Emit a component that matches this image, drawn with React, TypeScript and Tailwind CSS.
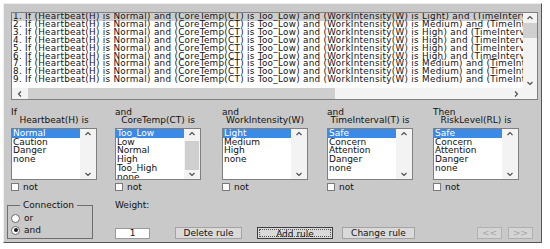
import React from "react";

type Dir = "up" | "down" | "left" | "right";

function Chev({ dir, color = "#4a4a4a" }: { dir: Dir; color?: string }) {
  const d = {
    up: "M1.5 5 L4 2.5 L6.5 5",
    down: "M1.5 3 L4 5.5 L6.5 3",
    left: "M5 1.5 L2.5 4 L5 6.5",
    right: "M3 1.5 L5.5 4 L3 6.5",
  }[dir];
  return (
    <svg width="8" height="8" viewBox="0 0 8 8" className="block">
      <path d={d} fill="none" stroke={color} strokeWidth="1.1" />
    </svg>
  );
}

const wi = ["Light", "Medium", "High", "High", "High", "High", "Medium", "Medium", "Medium"];
const rules = wi.map(
  (w, i) =>
    `${i + 1}. If (Heartbeat(H) is Normal) and (CoreTemp(CT) is Too_Low) and (WorkIntensity(W) is ${w}) and (TimeInterval(T) is Safe) then (RiskLevel(RL) is Safe) (1)`
);

function ListBox({ items, thumb }: { items: string[]; thumb?: boolean }) {
  return (
    <div className="w-[86px] h-[52px] bg-white border border-[#7f7f7f] flex">
      <div className="flex-1 overflow-hidden text-[9px] leading-[8.7px] whitespace-nowrap">
        {items.map((it, i) => (
          <div key={i} className={i === 0 ? "bg-[#3a8ae6] text-white pl-[1px]" : "pl-[1px]"}>
            {it}
          </div>
        ))}
      </div>
      <div className="w-[16px] bg-[#f3f3f3] flex flex-col items-center">
        <div className="h-[10px] flex items-center">
          <Chev dir="up" />
        </div>
        <div className="flex-1 w-full px-[1px]">
          {thumb && <div className="mt-[2px] h-[29px] bg-[#cfcfcf]" />}
        </div>
        <div className="h-[10px] flex items-center">
          <Chev dir="down" />
        </div>
      </div>
    </div>
  );
}

function Column({ l1, l2, items, thumb }: { l1: string; l2: string; items: string[]; thumb?: boolean }) {
  return (
    <div className="flex flex-col text-[9px]">
      <div className="h-[8px] leading-[8px]">{l1}</div>
      <div className="h-[8px] leading-[8px] w-[86px] text-center whitespace-nowrap">{l2}</div>
      <div className="mt-[4px]">
        <ListBox items={items} thumb={thumb} />
      </div>
      <div className="mt-[3px] h-[8px] flex items-center gap-[4px]">
        <div className="w-[8px] h-[8px] bg-white border border-[#7a7a7a]" />
        <span className="leading-[8px]">not</span>
      </div>
    </div>
  );
}

function Radio({ checked, label }: { checked?: boolean; label: string }) {
  return (
    <div className="h-[10px] flex items-center gap-[4px]">
      <div className="w-[9px] h-[9px] rounded-full bg-white border border-[#6a6a6a] flex items-center justify-center">
        {checked && <div className="w-[4px] h-[4px] rounded-full bg-[#1a1a1a]" />}
      </div>
      <span className="leading-[8px]">{label}</span>
    </div>
  );
}

export default function App() {
  return (
    <div className="w-[550px] h-[249px] bg-white pt-[3px] pl-[3px] font-['DejaVu_Sans',sans-serif] text-[#111111]">
      <div className="w-[539px] h-[240px] bg-[#c9c9c9] border border-t-[#eeeeee] border-l-[#eeeeee] border-r-[#555555] border-b-[#555555] flex flex-col">
        {/* Rule list */}
        <div className="ml-[7px] mt-[8px] w-[527px] h-[88px] bg-white border border-[#7f7f7f] flex flex-col">
          <div className="flex h-[75px]">
            <div className="flex-1 overflow-hidden text-[8.8px] leading-[7.9px] tracking-[0.3px] whitespace-nowrap">
              {rules.map((r, i) => (
                <div key={i} className={i === 0 ? "bg-[#cdcdcd] pl-[1px]" : "pl-[1px]"}>
                  {r}
                </div>
              ))}
            </div>
            <div className="w-[14px] bg-[#f3f3f3] flex flex-col items-center">
              <div className="h-[10px] flex items-center">
                <Chev dir="up" />
              </div>
              <div className="w-full h-[15px] bg-[#cfcfcf]" />
              <div className="flex-1" />
              <div className="h-[10px] flex items-center">
                <Chev dir="down" />
              </div>
            </div>
          </div>
          <div className="flex h-[11px]">
            <div className="flex-1 bg-[#f3f3f3] flex items-center">
              <div className="w-[16px] flex justify-center">
                <Chev dir="left" />
              </div>
              <div className="w-[307px] h-full bg-[#cfcfcf]" />
              <div className="flex-1" />
              <div className="w-[14px] flex justify-center">
                <Chev dir="right" />
              </div>
            </div>
            <div className="w-[14px] bg-[#f3f3f3]" />
          </div>
        </div>

        {/* Columns */}
        <div className="ml-[7px] mt-[8px] grid grid-cols-[104px_107px_105px_106px_86px]">
          <Column l1="If" l2="Heartbeat(H) is" items={["Normal", "Caution", "Danger", "none"]} />
          <Column l1="and" l2="CoreTemp(CT) is" items={["Too_Low", "Low", "Normal", "High", "Too_High", "none"]} thumb />
          <Column l1="and" l2="WorkIntensity(W)" items={["Light", "Medium", "High", "none"]} />
          <Column l1="and" l2="TimeInterval(T) is" items={["Safe", "Concern", "Attention", "Danger", "none"]} />
          <Column l1="Then" l2="RiskLevel(RL) is" items={["Safe", "Concern", "Attention", "Danger", "none"]} />
        </div>

        {/* Bottom */}
        <div className="flex ml-[3px] mt-[10px] text-[9px]">
          <fieldset className="w-[86px] h-[38px] border border-[#6e6e6e] pl-[3px]">
            <legend className="ml-[9px] px-[3px] leading-[8px]">Connection</legend>
            <div className="mt-[4px]">
              <Radio label="or" />
            </div>
            <div className="mt-[2px]">
              <Radio label="and" checked />
            </div>
          </fieldset>
          <div className="ml-[22px] flex flex-col">
            <div className="h-[8px] leading-[8px]">Weight:</div>
            <div className="mt-[18px] h-[12px] flex items-center">
              <div className="w-[35px] h-[11px] bg-white border border-[#9a9a9a] text-center leading-[9px]">1</div>
              <button className="ml-[25px] w-[67px] h-[12px] bg-[#dadada] border border-[#a3a3a3] leading-[10px]">
                Delete rule
              </button>
              <button className="ml-[15px] w-[76px] h-[12px] bg-[#dadada] border border-[#3c3c3c] p-[1px]">
                <div className="w-full h-full border border-dotted border-[#555] leading-[8px]">Add rule</div>
              </button>
              <button className="ml-[9px] w-[73px] h-[12px] bg-[#dadada] border border-[#a3a3a3] leading-[10px]">
                Change rule
              </button>
              <button className="ml-[62px] w-[25px] h-[12px] bg-[#d4d4d4] border border-[#b0b0b0] text-[#a5a5a5] leading-[10px]">
                &lt;&lt;
              </button>
              <button className="ml-[6px] w-[25px] h-[12px] bg-[#d4d4d4] border border-[#b0b0b0] text-[#a5a5a5] leading-[10px]">
                &gt;&gt;
              </button>
            </div>
          </div>
        </div>
      </div>
    </div>
  );
}
